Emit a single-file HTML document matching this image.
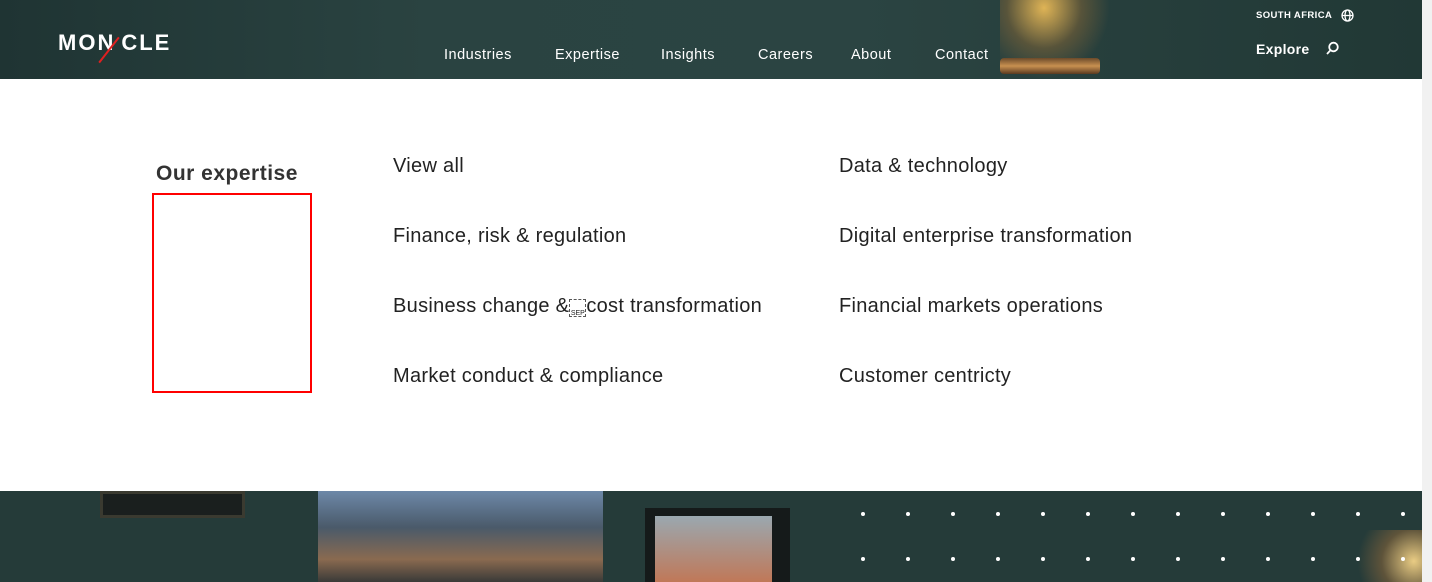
<!DOCTYPE html>
<html><head><meta charset="utf-8"><style>
*{margin:0;padding:0;box-sizing:border-box}
body{width:1432px;height:582px;overflow:hidden;background:#fff;font-family:"Liberation Sans",sans-serif;position:relative}
.hdr{position:absolute;left:0;top:0;width:1422px;height:79px;background:linear-gradient(90deg,#1f3433 0%,#2a4341 30%,#2b4442 60%,#213835 100%)}
.lamp{position:absolute;left:1000px;top:0;width:110px;height:79px;background:radial-gradient(ellipse at 40% 10%,rgba(255,200,90,.85),rgba(200,130,50,.3) 40%,transparent 70%)}
.pipe{position:absolute;left:1000px;top:58px;width:100px;height:16px;background:linear-gradient(#6b4a2a,#c89050,#5a3a20);border-radius:4px}
.nav{position:absolute;top:47px;color:#fff;font-size:14.5px;letter-spacing:0.5px}
.logo{position:absolute;left:58px;top:30px;color:#fff;font-weight:bold;font-size:22px;letter-spacing:2px}
.menu{position:absolute;font-size:20px;letter-spacing:0.3px;color:#222}
.foot{position:absolute;left:0;top:491px;width:1422px;height:91px;background:#253b39}
.dot{position:absolute;width:4px;height:4px;border-radius:50%;background:#fff}
.sb{position:absolute;right:0;top:0;width:10px;height:582px;background:#f1f1f1}
</style></head><body>
<div class="hdr"></div>
<div class="lamp"></div><div class="pipe"></div>
<div class="logo">MON<span style="display:inline-block;width:6px"></span>CLE</div>
<div style="position:absolute;left:108px;top:34px;width:2px;height:32px;background:#e02020;transform:rotate(38deg)"></div>
<div class="nav" style="left:444px">Industries</div>
<div class="nav" style="left:555px">Expertise</div>
<div class="nav" style="left:661px">Insights</div>
<div class="nav" style="left:758px">Careers</div>
<div class="nav" style="left:851px">About</div>
<div class="nav" style="left:935px">Contact</div>
<div style="position:absolute;left:1256px;top:10px;color:#fff;font-size:9.5px;font-weight:bold;letter-spacing:0.4px">SOUTH AFRICA</div>
<svg style="position:absolute;left:1341px;top:9px" width="13" height="13" viewBox="0 0 13 13" fill="none" stroke="#fff" stroke-width="1.3"><circle cx="6.5" cy="6.5" r="5.5"/><ellipse cx="6.5" cy="6.5" rx="2.5" ry="5.5"/><line x1="1" y1="6.5" x2="12" y2="6.5"/></svg>
<div style="position:absolute;left:1256px;top:41px;color:#fff;font-size:14px;font-weight:bold;letter-spacing:0.3px">Explore</div>
<svg style="position:absolute;left:1325px;top:41px" width="15" height="15" viewBox="0 0 15 15" fill="none" stroke="#fff" stroke-width="1.8"><circle cx="8.5" cy="6" r="4.3"/><line x1="5.5" y1="9.2" x2="2" y2="13"/></svg>

<div style="position:absolute;left:156px;top:162px;font-size:21px;font-weight:bold;color:#333;letter-spacing:0.5px">Our expertise</div>
<div style="position:absolute;left:152px;top:193px;width:160px;height:200px;border:2px solid #f00"></div>
<div class="menu" style="left:393px;top:155px">View all</div>
<div class="menu" style="left:393px;top:225px">Finance, risk &amp; regulation</div>
<div class="menu" style="left:393px;top:295px">Business change &amp;<span style="display:inline-block;width:17px;height:18px;border:1px dashed #555;vertical-align:-3px;font-size:7px;text-align:center;line-height:28px;letter-spacing:0">SEP</span>cost transformation</div>
<div class="menu" style="left:393px;top:365px">Market conduct &amp; compliance</div>
<div class="menu" style="left:839px;top:155px">Data &amp; technology</div>
<div class="menu" style="left:839px;top:225px">Digital enterprise transformation</div>
<div class="menu" style="left:839px;top:295px">Financial markets operations</div>
<div class="menu" style="left:839px;top:365px">Customer centricty</div>

<div class="foot"></div>
<div style="position:absolute;left:100px;top:491px;width:145px;height:27px;background:#1a1f1e;border:3px solid #3a3a30"></div>
<div style="position:absolute;left:318px;top:491px;width:285px;height:91px;background:linear-gradient(180deg,#6d88a8,#4a5a6a 40%,#8a6a50 75%,#3a3a38)"></div>
<div style="position:absolute;left:645px;top:508px;width:145px;height:74px;background:#151a1a"></div>
<div style="position:absolute;left:655px;top:516px;width:117px;height:66px;background:linear-gradient(180deg,#9aa8b0,#c07858)"></div>
<div style="position:absolute;left:1340px;top:530px;width:82px;height:52px;background:radial-gradient(circle at 90% 60%,rgba(255,220,140,.9),rgba(180,120,60,.4) 40%,transparent 70%)"></div>
<div id="dots"></div>
<div class="sb"></div>
<script>
var d=document.getElementById('dots'),h='';
for(var r=0;r<2;r++)for(var i=0;i<13;i++)h+='<div class="dot" style="left:'+(861+i*45)+'px;top:'+(512+r*45)+'px"></div>';
d.innerHTML=h;
</script>
</body></html>
